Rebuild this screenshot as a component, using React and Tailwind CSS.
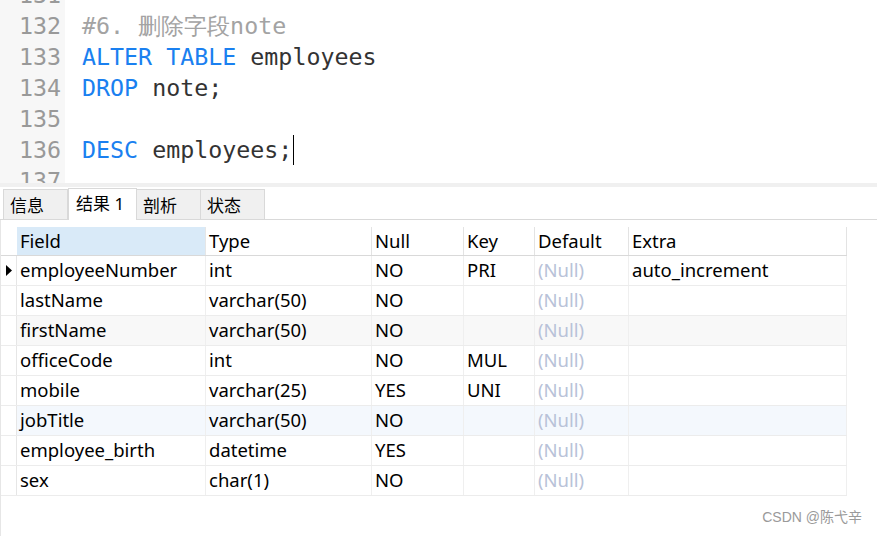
import React from 'react'

const mono = { fontFamily: '"DejaVu Sans Mono", "Liberation Mono", monospace' }
const ui = { fontFamily: '"Noto Sans", "Noto Sans CJK SC", sans-serif' }

const lines = [
  { n: 131, parts: [] },
  { n: 132, parts: [['#6. 删除字段note', 'text-[#a3a3a3]']] },
  { n: 133, parts: [['ALTER TABLE', 'text-[#1a80f0]'], [' employees', 'text-[#333333]']] },
  { n: 134, parts: [['DROP', 'text-[#1a80f0]'], [' note;', 'text-[#333333]']] },
  { n: 135, parts: [] },
  { n: 136, parts: [['DESC', 'text-[#1a80f0]'], [' employees;', 'text-[#333333]']], cursor: true },
  { n: 137, parts: [] },
]

const columns = [
  { name: 'Field', w: 'w-[189px]' },
  { name: 'Type', w: 'w-[166px]' },
  { name: 'Null', w: 'w-[92px]' },
  { name: 'Key', w: 'w-[71px]' },
  { name: 'Default', w: 'w-[94px]' },
  { name: 'Extra', w: 'w-[218px]' },
]

const rows = [
  ['employeeNumber', 'int', 'NO', 'PRI', null, 'auto_increment'],
  ['lastName', 'varchar(50)', 'NO', '', null, ''],
  ['firstName', 'varchar(50)', 'NO', '', null, ''],
  ['officeCode', 'int', 'NO', 'MUL', null, ''],
  ['mobile', 'varchar(25)', 'YES', 'UNI', null, ''],
  ['jobTitle', 'varchar(50)', 'NO', '', null, ''],
  ['employee_birth', 'datetime', 'YES', '', null, ''],
  ['sex', 'char(1)', 'NO', '', null, ''],
]

const rowBg = ['bg-white', 'bg-white', 'bg-[#f8f8f8]', 'bg-white', 'bg-white', 'bg-[#f4f8fd]', 'bg-white', 'bg-white']

function Editor() {
  return (
    <div className="h-[183px] overflow-hidden bg-white flex">
      <div className="w-[65px] bg-[#f7f7f7] shrink-0">
        <div className="-mt-[21px]">
          {lines.map((l) => (
            <div key={l.n} className="h-[31px] leading-[31px] text-[23.3px] text-[#999999] pl-[19px]" style={mono}>
              {l.n}
            </div>
          ))}
        </div>
      </div>
      <div className="flex-1 pl-[17px]">
        <div className="-mt-[21px]">
          {lines.map((l) => (
            <div key={l.n} className="h-[31px] leading-[31px] text-[23.3px] whitespace-pre flex items-center" style={mono}>
              {l.parts.map(([t, c], i) => (
                <span key={i} className={c}>{t}</span>
              ))}
              {l.cursor && <span className="inline-block w-[1px] h-[30px] bg-black ml-[1px]" />}
            </div>
          ))}
        </div>
      </div>
    </div>
  )
}

function Tabs() {
  const tabs = ['信息', '结果 1', '剖析', '状态']
  return (
    <div className="h-[33px] border-b border-[#d9d9d9] bg-white flex items-end pl-[3px]" style={ui}>
      {tabs.map((t, i) =>
        i === 1 ? (
          <div key={t} className="w-[69px] h-[32px] -mb-[1px] bg-white border border-b-0 border-[#d9d9d9] pl-[7px] text-[17px] leading-[30px] text-black">
            {t}
          </div>
        ) : (
          <div key={t} className="w-[65px] h-[30px] bg-[#f0f0f0] border border-b-0 border-[#d9d9d9] -ml-[1px] first:ml-0 pl-[6px] text-[17px] leading-[31px] text-black">
            {t}
          </div>
        )
      )}
    </div>
  )
}

function Grid() {
  return (
    <div className="flex-1 bg-white border-l border-[#e6e6e6] pt-[7px] relative" style={ui}>
      <div className="w-fit">
        <div className="flex h-[29px] border-b border-[#d9d9d9]">
          <div className="w-[16px] shrink-0" />
          {columns.map((c, i) => (
            <div
              key={c.name}
              className={`${c.w} shrink-0 border-r ${i === 0 ? 'bg-[#d9eaf8] border-[#e6e6e6]' : 'border-[#e3e3e3]'} ${i === columns.length - 1 ? 'border-[#d6d6d6]' : ''} pl-[3px] text-[18.5px] leading-[28px] text-black`}
            >
              {c.name}
            </div>
          ))}
        </div>
        {rows.map((r, ri) => (
          <div key={ri} className={`flex h-[30px] border-b border-[#ececec] ${rowBg[ri]}`}>
            <div className="w-[16px] shrink-0 border-r border-[#e6e6e6] bg-white flex items-center justify-center">
              {ri === 0 && (
                <svg width="6" height="11" viewBox="0 0 6 11">
                  <path d="M0 0 L6 5.5 L0 11 Z" fill="#000" />
                </svg>
              )}
            </div>
            {r.map((v, ci) => (
              <div
                key={ci}
                className={`${columns[ci].w} shrink-0 border-r border-[#efefef] pl-[3px] text-[18.5px] leading-[28px] ${v === null ? 'text-[#b8c2d8]' : 'text-black'}`}
              >
                {v === null ? '(Null)' : v}
              </div>
            ))}
          </div>
        ))}
      </div>
      <div className="absolute right-[15px] bottom-[8px] text-[14px] text-[#9a9a9a]" style={{ fontFamily: '"Liberation Sans", "Noto Sans CJK SC", sans-serif' }}>
        CSDN @陈弋辛
      </div>
    </div>
  )
}

export default function App() {
  return (
    <div className="w-[877px] h-[536px] overflow-hidden flex flex-col bg-white">
      <Editor />
      <div className="h-[4px] bg-[#f0f0f0]" />
      <Tabs />
      <Grid />
    </div>
  )
}
